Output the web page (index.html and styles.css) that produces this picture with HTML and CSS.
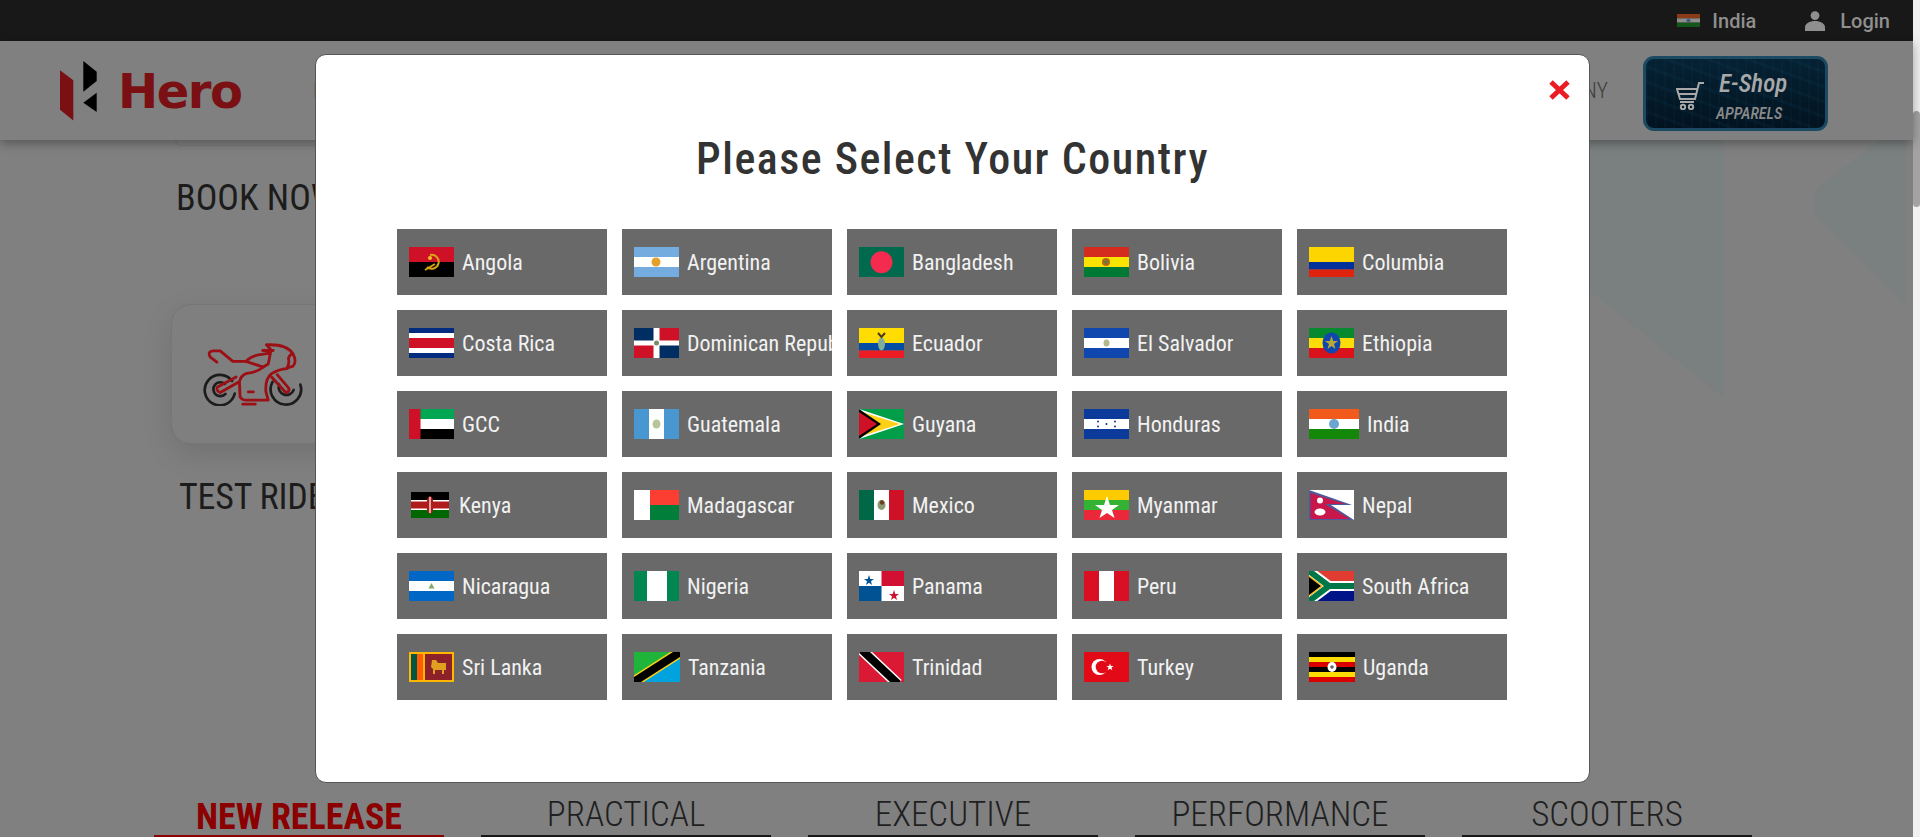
FILE: index.html
```html
<!DOCTYPE html>
<html lang="en">
<head>
  <meta charset="UTF-8">
  <title>Hero - Please Select Your Country</title>
  <link rel="stylesheet" href="styles.css">
</head>
<body>
  <div class="page">
    <div class="topbar">
      <a class="top-link">
        <svg class="top-flag" viewBox="0 0 45 30" preserveAspectRatio="none"><rect width="45" height="10" fill="#8a3a14"/><rect y="10" width="45" height="10" fill="#8d8d8d"/><rect y="20" width="45" height="10" fill="#14561a"/><circle cx="22.5" cy="15" r="4" fill="#3a5a80"/></svg>
        India
      </a>
      <a class="top-link">
        <svg class="top-user" viewBox="0 0 20 20"><circle cx="10" cy="4.6" r="4.4" fill="#8f8f8f"/><path d="M0 20v-3.5C0 12.5 4.5 10 10 10s10 2.5 10 6.500V20z" fill="#8f8f8f"/></svg>
        Login
      </a>
    </div>

    <header class="header">
      <div class="logo">
        <svg class="logo-mark" viewBox="60 60 37 60"><polygon points="60,69.300 73.300,79.300 73.300,119.500 60,108.700" fill="#7a1013"/><polygon points="83.300,60 96.700,70.700 96.700,80 83.300,90.700" fill="#000"/><polygon points="96.700,91.700 83.300,101.700 96.700,111" fill="#000"/></svg>
        <span class="logo-text">Hero</span>
      </div>
      <nav class="nav">
        <a>MOTORCYCLES</a>
        <a>SCOOTERS</a>
        <a>DEALERS</a>
        <a>SERVICE</a>
        <a>COMPANY</a>
      </nav>
      <a class="eshop">
        <svg class="cart" viewBox="0 0 28 28" fill="none" stroke="#a8a8a8" stroke-width="2"><path d="M28 1h-5l-4 16H4L1 7h20"/><path d="M3 12h17M4 20h14"/><circle cx="7" cy="25" r="2.200"/><circle cx="15" cy="25" r="2.200"/></svg>
        <span class="eshop-text"><b>E-Shop</b><i>APPARELS</i></span>
      </a>
    </header>

    <main class="content">
      <svg class="bg-shapes" viewBox="0 0 1913 700" preserveAspectRatio="none"><polygon points="1589,0 1724,0 1724,258 1589,150" fill="#7a7f7f"/><polygon points="1815,50 1880,0 1906,0 1906,165 1815,75" fill="#7a7f7f"/></svg>
      <div class="card-stub"></div>
      <h3 class="card-title book">BOOK NOW</h3>
      <div class="card">
        <svg class="bike" viewBox="608 190 302 192" fill="none" stroke-linecap="round" stroke-linejoin="round">
          <g stroke="#1c1c1c" stroke-width="8">
            <path d="M704 345a46 46 0 1 1-8-38"/>
            <path d="M676 346a21 21 0 1 1-2-30"/>
            <path d="M818 310a46 46 0 1 0 84 8"/>
            <path d="M838 318a21 21 0 1 0 44 16"/>
          </g>
          <g stroke="#9c0f14" stroke-width="8.500">
            <path d="M650 250L630 235Q620 217 640 216H660L698 248H738"/>
            <path d="M738 248Q752 230 790 226L812 222L805 256L790 265L738 248"/>
            <path d="M800 198Q860 195 880 225Q892 250 880 262L862 268Q870 250 866 240Q868 228 878 225"/>
            <path d="M800 198L815 215M788 215H820"/>
            <path d="M790 265Q770 282 740 284Q722 290 718 310L720 355Q725 365 740 365H805L798 340Q795 300 815 285Q835 272 862 270"/>
            <path d="M652 325L708 295M660 342L716 310M652 325Q645 335 660 342"/>
            <path d="M815 295L858 342M832 288L868 330M858 342Q868 342 868 330"/>
            <path d="M728 377H766M745 340H760"/>
          </g>
        </svg>
      </div>
      <h3 class="card-title ride">TEST RIDE</h3>

      <div class="tabs">
        <a class="tab active">NEW RELEASE</a>
        <a class="tab">PRACTICAL</a>
        <a class="tab">EXECUTIVE</a>
        <a class="tab">PERFORMANCE</a>
        <a class="tab">SCOOTERS</a>
      </div>
    </main>
  </div>
  <div class="scrollbar"><div class="thumb"></div></div>

  <div class="modal">
    <button class="close" aria-label="Close">
      <svg viewBox="0 0 21 20"><path d="M2 2l17 16M19 2L2 18" stroke="#ec1c24" stroke-width="5" fill="none"/></svg>
    </button>
    <h2 class="modal-title">Please Select Your Country</h2>
    <div class="country-grid">
      <a class="country"><svg class="flag" viewBox="0 0 45 30" preserveAspectRatio="none"><rect width="45" height="15" fill="#ce1126"/><rect y="15" width="45" height="15"/><path d="M21 8a7 7 0 1 1-3 12M16 23l10-6" fill="none" stroke="#d7a512" stroke-width="2"/><circle cx="21" cy="11" r="2" fill="#f0c020"/></svg><span>Angola</span></a>
      <a class="country"><svg class="flag" viewBox="0 0 45 30" preserveAspectRatio="none"><rect width="45" height="30" fill="#74acdf"/><rect y="10" width="45" height="10" fill="#fff"/><circle cx="22" cy="15" r="4.500" fill="#e5a02a"/></svg><span>Argentina</span></a>
      <a class="country"><svg class="flag" viewBox="0 0 45 30" preserveAspectRatio="none"><rect width="45" height="30" fill="#006a4e"/><circle cx="22.500" cy="15.300" r="11" fill="#f42a4f"/></svg><span>Bangladesh</span></a>
      <a class="country"><svg class="flag" viewBox="0 0 45 30" preserveAspectRatio="none"><rect width="45" height="10" fill="#d52b1e"/><rect y="10" width="45" height="10" fill="#f9e300"/><rect y="20" width="45" height="10" fill="#007934"/><circle cx="22" cy="15" r="4" fill="#b5651d"/><circle cx="22" cy="15" r="1.500" fill="#3a8a3a"/></svg><span>Bolivia</span></a>
      <a class="country"><svg class="flag" viewBox="0 0 45 30" preserveAspectRatio="none"><rect width="45" height="15" fill="#fdd500"/><rect y="15" width="45" height="7.500" fill="#00309a"/><rect y="22.500" width="45" height="7.500" fill="#e0230f"/></svg><span>Columbia</span></a>

      <a class="country"><svg class="flag" viewBox="0 0 45 30" preserveAspectRatio="none"><rect width="45" height="30" fill="#002b7f"/><rect y="5" width="45" height="20" fill="#fff"/><rect y="10" width="45" height="10" fill="#ce1126"/></svg><span>Costa Rica</span></a>
      <a class="country"><svg class="flag" viewBox="0 0 45 30" preserveAspectRatio="none"><rect width="45" height="30" fill="#fff"/><rect width="19.500" height="12.500" fill="#002d62"/><rect x="25.500" width="19.500" height="12.500" fill="#ce1126"/><rect y="17.500" width="19.500" height="12.500" fill="#ce1126"/><rect x="25.500" y="17.500" width="19.500" height="12.500" fill="#002d62"/><circle cx="22.500" cy="15" r="2.500" fill="#7a8a6a"/></svg><span>Dominican Republic</span></a>
      <a class="country"><svg class="flag" viewBox="0 0 45 30" preserveAspectRatio="none"><rect width="45" height="15" fill="#ffdd00"/><rect y="15" width="45" height="7.500" fill="#034ea2"/><rect y="22.500" width="45" height="7.500" fill="#ed1c24"/><ellipse cx="22.500" cy="16" rx="3.500" ry="6.500" fill="#7fae9a"/><path d="M19 5l3.500 4 3.500-4" stroke="#4a3a20" stroke-width="2" fill="none"/></svg><span>Ecuador</span></a>
      <a class="country"><svg class="flag" viewBox="0 0 45 30" preserveAspectRatio="none"><rect width="45" height="30" fill="#0f47af"/><rect y="10" width="45" height="10" fill="#fff"/><ellipse cx="22.500" cy="15" rx="3" ry="3.500" fill="#b3b78c"/></svg><span>El Salvador</span></a>
      <a class="country"><svg class="flag" viewBox="0 0 45 30" preserveAspectRatio="none"><rect width="45" height="10" fill="#078930"/><rect y="10" width="45" height="10" fill="#fcdd09"/><rect y="20" width="45" height="10" fill="#da121a"/><ellipse cx="22.500" cy="15" rx="9" ry="10.500" fill="#0f47af"/><polygon points="22.500,8 24.200,13 29,13 25,16 26.500,21 22.500,18 18.500,21 20,16 16,13 20.800,13" fill="#b8a838"/></svg><span>Ethiopia</span></a>

      <a class="country"><svg class="flag" viewBox="0 0 45 30" preserveAspectRatio="none"><rect width="45" height="10" fill="#00a651"/><rect y="10" width="45" height="10" fill="#fff"/><rect y="20" width="45" height="10"/><rect width="11.500" height="30" fill="#ce1126"/></svg><span>GCC</span></a>
      <a class="country"><svg class="flag" viewBox="0 0 45 30" preserveAspectRatio="none"><rect width="45" height="30" fill="#4997d0"/><rect x="15" width="15" height="30" fill="#fff"/><ellipse cx="22.500" cy="15" rx="4" ry="4.500" fill="#b8c49c"/></svg><span>Guatemala</span></a>
      <a class="country"><svg class="flag" viewBox="0 0 45 30" preserveAspectRatio="none"><rect width="45" height="30" fill="#009e49"/><polygon points="0,0 45,15 0,30" fill="#fff"/><polygon points="0,2 41,15 0,28" fill="#fcd116"/><polygon points="0,0 22,15 0,30"/><polygon points="0,3 18,15 0,27" fill="#ce1126"/></svg><span>Guyana</span></a>
      <a class="country"><svg class="flag" viewBox="0 0 45 30" preserveAspectRatio="none"><rect width="45" height="30" fill="#0c3a9a"/><rect y="10" width="45" height="10" fill="#fff"/><g fill="#0c3a9a"><circle cx="14" cy="12.500" r="1"/><circle cx="14" cy="17.500" r="1"/><circle cx="22.500" cy="15" r="1"/><circle cx="31" cy="12.500" r="1"/><circle cx="31" cy="17.500" r="1"/></g></svg><span>Honduras</span></a>
      <a class="country"><svg class="flag flag-india" viewBox="0 0 50 30" preserveAspectRatio="none"><rect width="50" height="10" fill="#f15a1a"/><rect y="10" width="50" height="10" fill="#fff"/><rect y="20" width="50" height="10" fill="#138808"/><circle cx="25" cy="15" r="5" fill="#6aa6cf"/></svg><span>India</span></a>

      <a class="country"><svg class="flag flag-kenya" viewBox="0 0 38 26" preserveAspectRatio="none"><rect width="38" height="8" fill="#000"/><rect y="8" width="38" height="10" fill="#fff"/><rect y="9.500" width="38" height="7" fill="#b01c1c"/><rect y="18" width="38" height="8" fill="#006600"/><ellipse cx="19" cy="13" rx="3.500" ry="9" fill="#b01c1c"/><path d="M19 5v16" stroke="#fff" stroke-width="1.200"/></svg><span>Kenya</span></a>
      <a class="country"><svg class="flag" viewBox="0 0 45 30" preserveAspectRatio="none"><rect width="16" height="30" fill="#fff"/><rect x="16" width="29" height="15" fill="#fc3d32"/><rect x="16" y="15" width="29" height="15" fill="#007e3a"/></svg><span>Madagascar</span></a>
      <a class="country"><svg class="flag" viewBox="0 0 45 30" preserveAspectRatio="none"><rect width="15" height="30" fill="#006847"/><rect x="15" width="15" height="30" fill="#fff"/><rect x="30" width="15" height="30" fill="#ce1126"/><ellipse cx="22.500" cy="15" rx="4" ry="5" fill="#8a9a70"/><circle cx="23" cy="12.500" r="2.200" fill="#6a4020"/></svg><span>Mexico</span></a>
      <a class="country"><svg class="flag" viewBox="0 0 45 30" preserveAspectRatio="none"><rect width="45" height="10" fill="#fecb00"/><rect y="10" width="45" height="10" fill="#34b233"/><rect y="20" width="45" height="10" fill="#ea2839"/><polygon points="23,6 26,15 35,15 28,20 30.500,28 23,23 15.500,28 18,20 11,15 20,15" fill="#fff"/></svg><span>Myanmar</span></a>
      <a class="country"><svg class="flag" viewBox="0 0 45 30" preserveAspectRatio="none"><rect width="45" height="30" fill="#fff"/><polygon points="0,0 43,15 22,15 45,30 0,30" fill="#4a5a9a"/><polygon points="1.500,3 36,14 16,14 41,29 1.500,29" fill="#c8174a"/><circle cx="11" cy="10.500" r="3" fill="#fff"/><ellipse cx="11" cy="22" rx="5.500" ry="3.500" fill="#fff"/></svg><span>Nepal</span></a>

      <a class="country"><svg class="flag" viewBox="0 0 45 30" preserveAspectRatio="none"><rect width="45" height="30" fill="#0067c6"/><rect y="10" width="45" height="10" fill="#fff"/><polygon points="22.500,12 25.500,17.500 19.500,17.500" fill="#7faa6a"/></svg><span>Nicaragua</span></a>
      <a class="country"><svg class="flag" viewBox="0 0 45 30" preserveAspectRatio="none"><rect width="45" height="30" fill="#008751"/><rect x="13" width="20" height="30" fill="#fff"/></svg><span>Nigeria</span></a>
      <a class="country"><svg class="flag" viewBox="0 0 45 30" preserveAspectRatio="none"><rect width="45" height="30" fill="#fff"/><rect x="22.500" width="22.500" height="15" fill="#d21034"/><rect y="15" width="22.500" height="15" fill="#005293"/><polygon points="10,4 11.300,8 15,8 12,10.300 13,14 10,11.800 7,14 8,10.300 5,8 8.700,8" fill="#005293"/><polygon points="35,19 36.300,23 40,23 37,25.300 38,29 35,26.800 32,29 33,25.300 30,23 33.700,23" fill="#d21034"/></svg><span>Panama</span></a>
      <a class="country"><svg class="flag" viewBox="0 0 45 30" preserveAspectRatio="none"><rect width="45" height="30" fill="#d91023"/><rect x="15" width="15" height="30" fill="#fff"/></svg><span>Peru</span></a>
      <a class="country"><svg class="flag" viewBox="0 0 45 30" preserveAspectRatio="none"><rect width="45" height="15" fill="#e03c31"/><rect y="15" width="45" height="15" fill="#001489"/><path d="M0 0L20 15L0 30M20 15H45" fill="none" stroke="#fff" stroke-width="10"/><path d="M0 0L20 15L0 30M20 15H45" fill="none" stroke="#007749" stroke-width="6"/><polygon points="0,5 13,15 0,25" fill="#000"/><path d="M0 5L13 15L0 25" fill="none" stroke="#ffb81c" stroke-width="1.500"/></svg><span>South Africa</span></a>

      <a class="country"><svg class="flag" viewBox="0 0 45 30" preserveAspectRatio="none"><rect width="45" height="30" fill="#ffb700"/><rect x="2" y="2" width="6" height="26" fill="#005641"/><rect x="8" y="2" width="6" height="26" fill="#ff5b00"/><rect x="16" y="2" width="27" height="26" fill="#8d2129"/><path d="M23 8h4l2 3h8v7h-2v4h-2v-4h-7v4h-2v-5l-2-2z" fill="#e0a020"/></svg><span>Sri Lanka</span></a>
      <a class="country"><svg class="flag flag-tanzania" viewBox="0 0 46 30" preserveAspectRatio="none"><rect width="46" height="30" fill="#00a3dd"/><polygon points="0,0 46,0 0,30" fill="#1eb53a"/><path d="M-2 31L48 -1" stroke="#fcd116" stroke-width="11"/><path d="M-2 31L48 -1" stroke="#000" stroke-width="8"/></svg><span>Tanzania</span></a>
      <a class="country"><svg class="flag" viewBox="0 0 45 30" preserveAspectRatio="none"><rect width="45" height="30" fill="#da1a35"/><path d="M3 -2L39 32" stroke="#fff" stroke-width="11"/><path d="M3 -2L39 32" stroke="#000" stroke-width="8"/></svg><span>Trinidad</span></a>
      <a class="country"><svg class="flag" viewBox="0 0 45 30" preserveAspectRatio="none"><rect width="45" height="30" fill="#e30a17"/><circle cx="15.500" cy="15" r="8" fill="#fff"/><circle cx="18" cy="15" r="6.300" fill="#e30a17"/><polygon points="26,11.500 27,14 29.700,14 27.500,15.600 28.300,18.300 26,16.700 23.700,18.300 24.500,15.600 22.300,14 25,14" fill="#fff"/></svg><span>Turkey</span></a>
      <a class="country"><svg class="flag flag-uganda" viewBox="0 0 46 30" preserveAspectRatio="none"><rect width="46" height="5" fill="#000"/><rect y="5" width="46" height="5" fill="#fcdc04"/><rect y="10" width="46" height="5" fill="#d90000"/><rect y="15" width="46" height="5" fill="#000"/><rect y="20" width="46" height="5" fill="#fcdc04"/><rect y="25" width="46" height="5" fill="#d90000"/><ellipse cx="23" cy="15" rx="4.500" ry="5" fill="#fff"/><circle cx="23" cy="15" r="1.800" fill="#666"/></svg><span>Uganda</span></a>
    </div>
  </div>
</body>
</html>
```
FILE: styles.css
```css
* {
  box-sizing: border-box;
}
html, body {
  margin: 0;
  height: 837px;
  overflow: hidden;
}
body {
  font-family: Roboto, sans-serif;
  background: #808080;
  display: flex;
  position: relative;
}
.page {
  flex: 1;
  display: flex;
  flex-direction: column;
  min-width: 0;
}

/* top bar */
.topbar {
  height: 41px;
  background: #181818;
  display: flex;
  justify-content: flex-end;
  align-items: center;
  gap: 49px;
  padding-right: 23px;
}
.top-link {
  display: flex;
  align-items: center;
  gap: 12px;
  color: #8f8f8f;
  font-size: 20px;
  font-weight: 500;
  font-stretch: 88%;
}
.top-flag {
  width: 23px;
  height: 13px;
}
.top-user {
  width: 20px;
  height: 20px;
  margin-right: 3px;
}

/* header */
.header {
  height: 99px;
  background: #808080;
  display: flex;
  align-items: center;
  padding-left: 60px;
  box-shadow: 0 3px 10px rgba(0,0,0,0.35);
  position: relative;
  z-index: 2;
}
.logo {
  display: flex;
  align-items: center;
  gap: 21px;
  width: 183px;
  flex: none;
}
.logo-mark {
  width: 37px;
  height: 60px;
  flex: none;
}
.logo-text {
  font-family: "DejaVu Sans", sans-serif;
  font-weight: 700;
  font-size: 48px;
  letter-spacing: -1.500px;
  line-height: 60px;
  color: #7a1013;
}
.nav {
  flex: 1;
  margin-left: 70px;
  display: flex;
  justify-content: space-between;
  font-size: 22px;
  font-weight: 300;
  font-stretch: 80%;
  color: #3c3c3c;
}
.eshop {
  width: 185px;
  height: 75px;
  margin: 6px 85px 0 35px;
  border: 3px solid #1c4a63;
  border-radius: 11px;
  background:
    repeating-linear-gradient(90deg, rgba(70,120,140,0.04) 0 2px, transparent 2px 9px),
    repeating-linear-gradient(20deg, rgba(30,110,150,0.07) 0 3px, transparent 3px 14px),
    linear-gradient(180deg, #052234, #021320);
  display: flex;
  align-items: center;
  padding-left: 30px;
  gap: 15px;
}
.cart {
  width: 28px;
  height: 28px;
  margin-top: 4px;
}
.eshop-text {
  display: flex;
  flex-direction: column;
  gap: 9px;
  margin-top: 6px;
  font-style: italic;
  white-space: nowrap;
}
.eshop-text b {
  font-size: 25px;
  font-weight: 500;
  font-stretch: 85%;
  color: #a8a8a8;
  line-height: 26px;
}
.eshop-text i {
  font-size: 16px;
  font-weight: 500;
  font-stretch: 85%;
  color: #8a8a8a;
  line-height: 16px;
  margin-left: -3px;
}

/* page behind the dialog */
.content {
  flex: 1;
  position: relative;
  display: flex;
  flex-direction: column;
  padding-left: 171px;
}
.bg-shapes {
  position: absolute;
  left: 0;
  top: 0;
  width: 1913px;
  height: 700px;
}
.card-stub {
  position: relative;
  width: 300px;
  height: 6px;
  margin-left: 4px;
  border: 1px solid #777;
  border-top: 0;
  border-radius: 0 0 14px 14px;
}
.card-title {
  position: relative;
  margin: 0;
  font-size: 36px;
  font-weight: 400;
  font-stretch: 75%;
  line-height: 40px;
  color: #1c1c1c;
}
.book {
  margin: 32px 0 0 5px;
}
.ride {
  margin: 33px 0 0 8px;
  letter-spacing: -0.2px;
}
.card {
  position: relative;
  width: 300px;
  height: 140px;
  margin-top: 86px;
  border: 1px solid #767676;
  border-radius: 20px;
  background: #7f7f7f;
  box-shadow: 0 10px 30px rgba(0,0,0,0.12);
  padding: 37px 0 0 31px;
}
.bike {
  display: block;
  width: 100px;
  height: 64px;
}
.tabs {
  position: relative;
  margin-top: auto;
  margin-left: -17px;
  display: flex;
  gap: 37px;
}
.tab {
  width: 290px;
  height: 44px;
  padding-top: 3px;
  border-bottom: 2px solid #181818;
  text-align: center;
  font-size: 35px;
  font-weight: 350;
  font-stretch: 75%;
  line-height: 38px;
  color: #1f1f1f;
}
.tab.active {
  border-bottom-color: #8b0000;
  color: #8b0000;
  font-size: 36px;
  font-weight: 700;
  line-height: 42px;
}

/* scrollbar */
.scrollbar {
  width: 7px;
  flex: none;
  background: #f1f1f1;
  padding-top: 111px;
}
.thumb {
  height: 96px;
  background: #a3a3a3;
  border-radius: 4px;
}

/* country dialog */
.modal {
  position: absolute;
  left: 315px;
  top: 54px;
  width: 1275px;
  height: 729px;
  background: #fff;
  border: 1px solid #555;
  border-radius: 11px;
  z-index: 5;
  overflow: hidden;
}
.close {
  position: absolute;
  right: 19px;
  top: 25px;
  width: 21px;
  height: 20px;
  padding: 0;
  border: 0;
  background: none;
}
.close svg {
  display: block;
  width: 21px;
  height: 20px;
}
.modal-title {
  margin: 0;
  padding-top: 79px;
  text-align: center;
  font-size: 44px;
  font-weight: 500;
  font-stretch: 76%;
  letter-spacing: 1.500px;
  line-height: 50px;
  color: #333;
}
.country-grid {
  margin: 45px 0 0 81px;
  display: grid;
  grid-template-columns: repeat(5, 210px);
  grid-auto-rows: 66px;
  gap: 15px;
}
.country {
  display: flex;
  align-items: center;
  gap: 8px;
  padding-left: 12px;
  background: #696969;
  color: #f2f2f2;
  font-size: 22px;
  font-weight: 400;
  font-stretch: 75%;
  white-space: nowrap;
  overflow: hidden;
}
.flag {
  width: 45px;
  height: 30px;
  flex: none;
}
.flag-india {
  width: 50px;
}
.flag-uganda, .flag-tanzania {
  width: 46px;
}
.flag-kenya {
  width: 38px;
  height: 26px;
  margin: 0 2px;
}
```
